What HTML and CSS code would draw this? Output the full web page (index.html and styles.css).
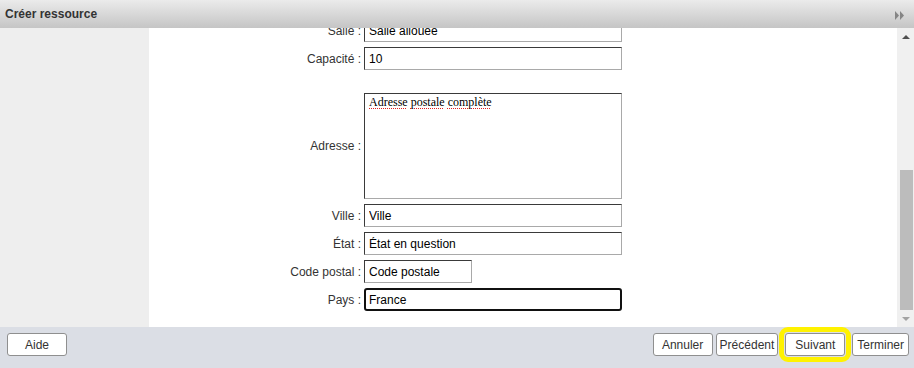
FILE: index.html
```html
<!DOCTYPE html>
<html lang="fr">
<head>
    <meta charset="UTF-8">
    <meta name="viewport" content="width=device-width, initial-scale=1.0">
    <title>Créer ressource</title>
    <link rel="stylesheet" href="styles.css">
</head>
<body>
    <div id="fenetre">
        <div id="barre-titre">
            <span class="titre">Créer ressource</span>
            <svg class="replier" width="10" height="9" viewBox="0 0 10 9">
                <polygon points="0,0 4,4.5 0,9" fill="#858585"/>
                <polygon points="5,0 9,4.5 5,9" fill="#858585"/>
            </svg>
        </div>

        <div id="corps">
            <div class="colonne-gauche"></div>
            <div class="contenu">
                <div class="formulaire">
                    <label class="libelle">Salle :</label>
                    <input type="text" class="champ" value="Salle allouée">

                    <label class="libelle">Capacité :</label>
                    <input type="text" class="champ" value="10">

                    <label class="libelle libelle-adresse">Adresse :</label>
                    <div class="zone-texte"><span class="faute">Adresse</span> <span class="faute">postale</span> <span class="faute">complète</span></div>

                    <label class="libelle">Ville :</label>
                    <input type="text" class="champ" value="Ville">

                    <label class="libelle">État :</label>
                    <input type="text" class="champ" value="État en question">

                    <label class="libelle">Code postal :</label>
                    <input type="text" class="champ champ-court" value="Code postale">

                    <label class="libelle">Pays :</label>
                    <input type="text" class="champ champ-actif" value="France">
                </div>
            </div>
            <div class="defilement">
                <div class="fleche fleche-haut"></div>
                <div class="piste"></div>
                <div class="curseur"></div>
                <div class="fleche fleche-bas"></div>
            </div>
        </div>

        <div id="pied">
            <button class="bouton">Aide</button>
            <div class="actions">
                <button class="bouton">Annuler</button>
                <button class="bouton">Précédent</button>
                <button class="bouton bouton-courant">Suivant</button>
                <button class="bouton bouton-serre">Terminer</button>
            </div>
        </div>
    </div>
</body>
</html>
```

FILE: styles.css
```css
body {
    margin: 0;
    font-family: "Liberation Sans", Arial, sans-serif;
    font-size: 12px;
    color: #333;
    background-color: #ffffff;
}
#fenetre {
    display: flex;
    flex-direction: column;
    width: 914px;
    height: 368px;
    overflow: hidden;
}
#barre-titre {
    height: 28px;
    flex: none;
    display: flex;
    align-items: center;
    justify-content: space-between;
    padding: 0 9px 0 5px;
    background: linear-gradient(#ebebeb, #c5c5c5);
    box-sizing: border-box;
}
.titre {
    font-weight: bold;
    font-size: 12px;
    color: #333;
}
.replier {
    display: block;
    margin-top: 2px;
}
#corps {
    flex: 1;
    display: flex;
    min-height: 0;
}
.colonne-gauche {
    width: 149px;
    flex: none;
    background-color: #eeeeee;
}
.contenu {
    flex: 1;
    background-color: #ffffff;
    overflow: hidden;
}
.formulaire {
    display: grid;
    grid-template-columns: 212px 258px;
    column-gap: 3px;
    row-gap: 5px;
    align-items: center;
    margin-top: -9px;
}
.libelle {
    text-align: right;
    color: #333;
    white-space: nowrap;
}
.champ {
    box-sizing: border-box;
    width: 258px;
    height: 23px;
    margin: 0;
    padding: 0 4px;
    border: 1px solid;
    border-color: #3a3a3a #a9a9a9 #a9a9a9 #3a3a3a;
    font-family: "Liberation Sans", Arial, sans-serif;
    font-size: 12px;
    color: #000;
    background-color: #fff;
    outline: none;
}
.champ-court {
    width: 108px;
}
.champ-actif {
    border: 2px solid #111;
    border-radius: 3px;
    padding: 0 3px;
}
.libelle-adresse {
    margin-top: 18px;
}
.zone-texte {
    box-sizing: border-box;
    width: 258px;
    height: 106px;
    margin-top: 18px;
    padding: 1px 4px;
    border: 1px solid;
    border-color: #3a3a3a #a9a9a9 #a9a9a9 #3a3a3a;
    font-family: "Liberation Serif", "Times New Roman", serif;
    font-size: 12px;
    color: #000;
}
.faute {
    text-decoration: underline dotted #e02020;
    text-decoration-thickness: 1px;
    text-underline-offset: 2px;
}
.defilement {
    width: 17px;
    flex: none;
    display: flex;
    flex-direction: column;
    align-items: center;
    background-color: #f0f0f0;
}
.fleche {
    height: 17px;
    width: 17px;
    flex: none;
    display: flex;
    justify-content: center;
    align-items: center;
}
.fleche::after {
    content: "";
    width: 0;
    height: 0;
    border-left: 4px solid transparent;
    border-right: 4px solid transparent;
}
.fleche-haut::after {
    border-bottom: 4px solid #505050;
}
.fleche-bas::after {
    border-top: 4px solid #a3a3a3;
}
.piste {
    flex: 1;
}
.curseur {
    width: 13px;
    height: 140px;
    flex: none;
    margin-left: 1px;
    background-color: #bcbcbc;
}
#pied {
    height: 41px;
    flex: none;
    display: flex;
    justify-content: space-between;
    align-items: flex-start;
    padding: 6px 5px 0 7px;
    box-sizing: border-box;
    background-color: #dbdee5;
}
.actions {
    display: flex;
    gap: 3px;
}
.bouton {
    box-sizing: border-box;
    height: 23px;
    min-width: 60px;
    padding: 0 3px;
    border: 1px solid #8f8f8f;
    border-radius: 3px;
    background-color: #ffffff;
    font-family: "Liberation Sans", Arial, sans-serif;
    font-size: 12px;
    color: #333;
}
.bouton-courant {
    margin: 0 4px;
    outline: 5px solid #fff200;
    outline-offset: 1px;
}
.bouton-serre {
    min-width: 0;
    padding: 0 4px;
}
```
